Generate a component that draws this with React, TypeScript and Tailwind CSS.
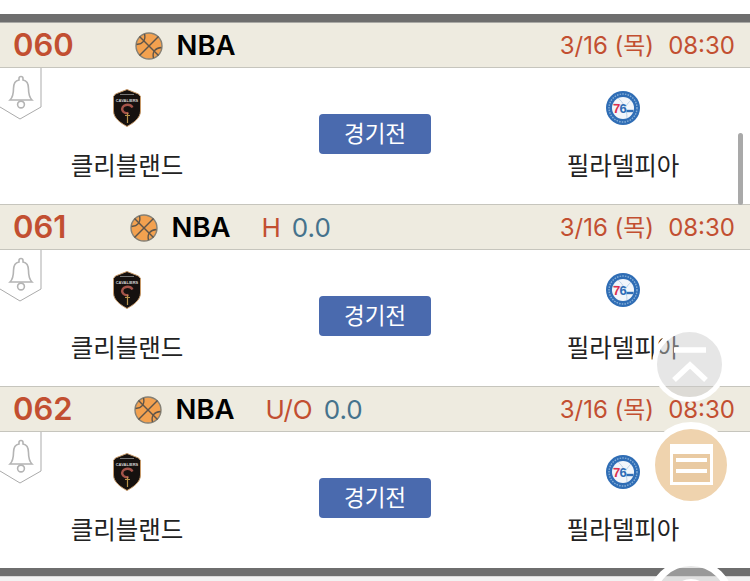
const matches = [
  { no: '060', noWidth: 'w-[60px]', date: '3/16 (목)', time: '08:30' },
  { no: '061', noWidth: 'w-[55px]', date: '3/16 (목)', time: '08:30', market: 'H', line: '0.0' },
  { no: '062', noWidth: 'w-[59px]', date: '3/16 (목)', time: '08:30', market: 'U/O', line: '0.0' },
]

function Basketball() {
  return (
    <svg viewBox="0 0 28 28" className="h-7 w-7 shrink-0">
      <circle cx="14" cy="14" r="13" fill="#f3a14f" stroke="#858075" strokeWidth="1.400" />
      <g fill="none" stroke="#5f554a" strokeWidth="1.400">
        <path d="M4.500 23.500 23.500 4.500" />
        <path d="M4.500 4.500 23.500 23.500" />
        <path d="M9.500 2C11 8 8 12 1.500 12.500" />
        <path d="M18.500 26C17 20 20 16 26.500 15.500" />
      </g>
    </svg>
  )
}

function BellTag() {
  return (
    <svg viewBox="0 0 42 52" className="absolute left-0 top-0 h-[52px] w-[42px]">
      <path d="M41 0V39L20 51 0 39" fill="#fff" stroke="#ababab" />
      <g fill="none" stroke="#b4b4b4" strokeWidth="1.600">
        <path d="M10 32c3-3 3.500-6 3.500-11.500 0-5 2.500-8 5.500-8.500V10.500a2 2 0 0 1 4 0V12c3 .5 5.500 3.500 5.500 8.500 0 5.500.5 8.500 3.500 11.500z" />
        <circle cx="21" cy="36.500" r="3.400" />
      </g>
    </svg>
  )
}

function CavsLogo() {
  return (
    <svg viewBox="0 0 28 38" className="h-[38px] w-7">
      <path d="M14 .5 25.500 5l2 2.500v14.500c0 7-7 12-13.500 15.500C7.500 34 .5 29 .5 22V7.500L2.500 5z" fill="#16110f" stroke="#c79a6a" strokeWidth="1" />
      <path d="M7 5.500h14" stroke="#777" strokeWidth="1" />
      <text x="14" y="12.500" textAnchor="middle" fontSize="4" fontWeight="700" fill="#d4d4d4" fontFamily="'Liberation Sans', sans-serif">CAVALIERS</text>
      <path d="M19.500 18.500c-1.500-2.500-4-3-6.500-2.500-3 .6-4.500 3-3.500 5.500 1 2.400 4 2.900 6 2.300" fill="none" stroke="#a5544a" strokeWidth="2.400" />
      <path d="M14.500 24v10M12 26.500h5" stroke="#b8924a" strokeWidth="1.200" />
    </svg>
  )
}

function SixersLogo() {
  return (
    <svg viewBox="0 0 34 34" className="h-[34px] w-[34px]">
      <circle cx="17" cy="17" r="17" fill="#2f6db5" />
      <circle cx="17" cy="17" r="14" fill="none" stroke="#86afd8" strokeWidth="1.400" strokeDasharray="1.500 1.200" />
      <circle cx="17" cy="17" r="11" fill="#f2f6fb" />
      <path d="M12 7c5 4 9 11 9 20M25 9c-4 4-6 7-6 10M7 13c5 0 10 1 13 3" fill="none" stroke="#bdd2e8" strokeWidth="1" />
      <text x="7" y="22" fontSize="13" fontWeight="700" fill="#dc2f4d" fontFamily="'Liberation Sans', sans-serif">7</text>
      <text x="13.500" y="22" fontSize="13" fontWeight="700" fill="#2f6db5" fontFamily="'Liberation Sans', sans-serif">6</text>
      <path d="M20.500 20h7" stroke="#2f6db5" strokeWidth="2.400" />
    </svg>
  )
}

function Team({ name, logo }: { name: string; logo: React.ReactNode }) {
  return (
    <div className="flex w-[254px] flex-col items-center pt-5">
      <div className="flex h-10 items-center justify-center">{logo}</div>
      <div className="mt-[22px] text-[24.500px] leading-[30px] text-[#222]">{name}</div>
    </div>
  )
}

function MatchRow({ match, first }: { match: (typeof matches)[number]; first: boolean }) {
  return (
    <section>
      <header className={`flex h-[46px] items-center border-b border-[#c6c5bd] bg-[#eeebe0] pl-[13px] pr-[15px] pt-[1px] ${first ? 'border-t border-t-[#a9a9a5]' : 'border-t border-t-[#c6c5bd]'}`}>
        <span className={`${match.noWidth} whitespace-nowrap text-[31px] font-semibold text-[#c24f31] font-['Inter',sans-serif]`}>{match.no}</span>
        <span className="ml-[62px]"><Basketball /></span>
        <span className="ml-[13.500px] text-[27.500px] font-semibold text-black font-['Inter',sans-serif]">NBA</span>
        {match.market && (
          <>
            <span className="ml-[31px] text-[26px] text-[#c24f31] font-['Inter',sans-serif]">{match.market}</span>
            <span className="ml-[11px] text-[26px] text-[#45728c] font-['Inter',sans-serif]">{match.line}</span>
          </>
        )}
        <span className="ml-auto text-[24px] text-[#c24f31] font-['Inter','Noto_Sans_CJK_KR',sans-serif]">{match.date}</span>
        <span className="ml-[14px] text-[24px] text-[#c24f31] font-['Inter',sans-serif]">{match.time}</span>
      </header>
      <div className="relative flex h-[136px] bg-white">
        <BellTag />
        <Team name="클리블랜드" logo={<CavsLogo />} />
        <div className="flex flex-1 justify-center pt-[46px]">
          <button className="h-10 w-28 rounded bg-[#4a6aae] pb-[2px] text-[22.500px] text-white">경기전</button>
        </div>
        <Team name="필라델피아" logo={<SixersLogo />} />
      </div>
    </section>
  )
}

export default function App() {
  return (
    <div className="relative h-[581px] w-[750px] overflow-hidden bg-white font-['Noto_Sans_CJK_KR',sans-serif]">
      <div className="h-[14px]" />
      <div className="h-2 bg-[#6e6e6e]" />
      {matches.map((m, i) => (
        <MatchRow key={m.no} match={m} first={i === 0} />
      ))}
      <div className="h-2 bg-[#6e6e6e]" />
      <div className="h-2 border-t border-[#d8d8d8] bg-[#f2f2f2]" />

      {/* scrollbar */}
      <div className="absolute left-[738px] top-[133px] h-[72px] w-[5px] rounded-full bg-[#a9a9a9]" />

      {/* floating buttons */}
      <div className="absolute left-[652px] top-[327px] flex h-[75px] w-[75px] items-center justify-center rounded-full border-[5px] border-white bg-[#cacaca]/[0.47]">
        <svg viewBox="0 0 36 36" className="h-9 w-9" fill="none" stroke="#fff" strokeWidth="5.500">
          <path d="M2 3h32" />
          <path d="M2 33 18 18l16 15" />
        </svg>
      </div>
      <div className="absolute left-[648px] top-[422px] flex h-[86px] w-[86px] items-center justify-center rounded-full border-[7px] border-white bg-[#efd3ae] pb-[2px]">
        <div className="flex h-[41px] w-[43px] flex-col border-[3.500px] border-t-[10px] border-white bg-[#e9caa2] px-[3px] pt-[4px]">
          <div className="h-1 bg-white" />
          <div className="mt-[7px] h-1 bg-white" />
        </div>
      </div>
      <div className="absolute left-[648px] top-[559px] flex h-[86px] w-[86px] justify-center rounded-full border-[7px] border-white bg-[#cacaca]/[0.47] pt-[13px]">
        <div className="h-10 w-10 rounded-full border-[4px] border-white" />
      </div>
    </div>
  )
}
